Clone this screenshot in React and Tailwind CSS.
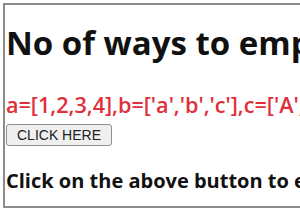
export default function App() {
  return (
    <div className="w-[300px] h-[210px] overflow-hidden bg-white" style={{ fontFamily: "'Open Sans', sans-serif" }}>
      <div className="ml-[3px] mt-[3px] w-[400px] h-[205px] border-2 border-[#8c8c8c] pl-[1px]">
        <h1 className="mt-[18px] text-[33px] leading-[40px] font-bold text-[#111] whitespace-nowrap">
          No of ways to empty the array
        </h1>
        <p className="mt-[29px] text-[21.6px] leading-[26px] font-semibold text-[#e0303c] whitespace-nowrap">
          a=[1,2,3,4],b=['a','b','c'],c=['A','B']
        </p>
        <button
          className="mt-[6px] h-[22px] px-[10px] text-[14px] leading-none text-[#222] bg-[#efefef] border border-[#8f8f8f] rounded-[3px]"
          style={{ fontFamily: "'Liberation Sans', Arial, sans-serif" }}
        >
          CLICK HERE
        </button>
        <p className="mt-[22px] text-[20px] leading-[26px] font-bold text-[#111] whitespace-nowrap">
          Click on the above button to empty the array
        </p>
      </div>
    </div>
  );
}
